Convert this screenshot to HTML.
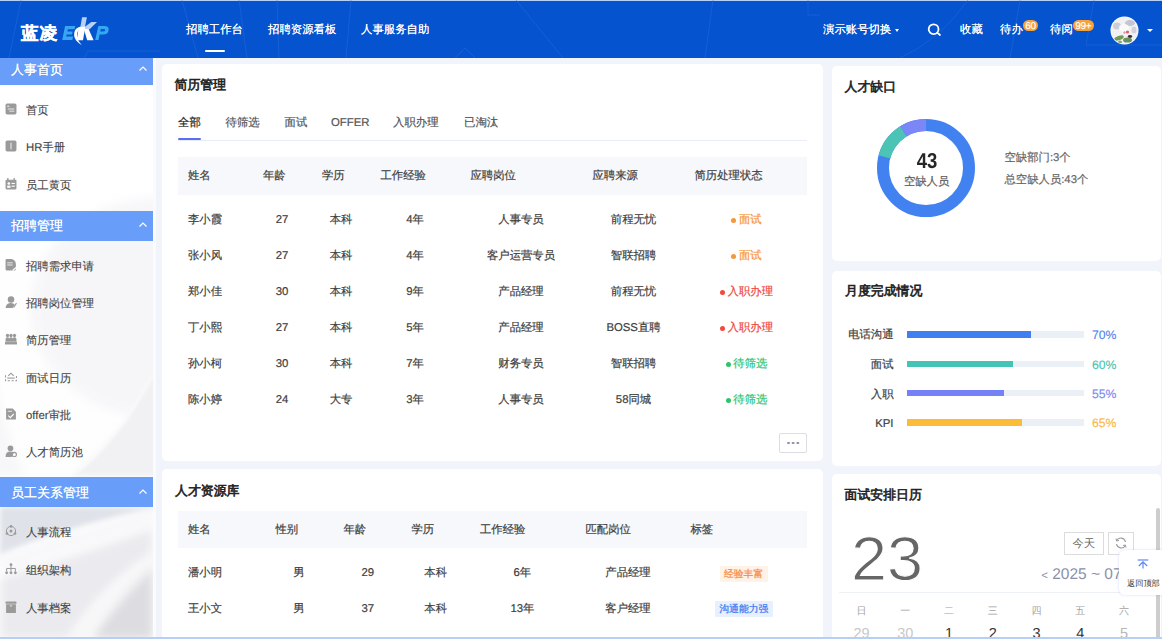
<!DOCTYPE html>
<html><head><meta charset="utf-8"><style>
*{box-sizing:border-box;margin:0;padding:0}
html,body{width:1162px;height:639px;overflow:hidden}
body{text-rendering:geometricPrecision;font-family:"Liberation Sans",sans-serif;background:#f1f4fa;position:relative;color:#333}
div{position:absolute;white-space:nowrap;line-height:1}
svg{position:absolute}
.card{background:#fff;border-radius:5px}
.nav{color:#fff;font-size:11.4px;text-shadow:0 0 0.4px #fff}
.grp{left:0;width:153px;background:#689ef9}
.gt{color:#fff;font-size:13px;left:11px;text-shadow:0 0 0.3px #fff}
.it{left:26px;font-size:11.35px;color:#444;-webkit-text-stroke:0.12px currentColor}
.ttl{font-size:12.9px;font-weight:normal;color:#222;-webkit-text-stroke:0.6px #222}
.th{background:#f6f8fb}
.t{font-size:11.35px;color:#404040;-webkit-text-stroke:0.2px currentColor}
.num{font-size:11.5px;color:#333}
</style></head><body>
<div style="left:0;top:0;width:1162px;height:58px;background:#0553cf;overflow:hidden">
<div style="left:0;top:0;width:1162px;height:1px;background:#b8cff6"></div>
<svg style="left:0;top:0" width="1162" height="58"><g stroke="#2f6fdc" stroke-width="0.8" fill="none" opacity="0.55">
<path d="M21 0 L9 58"/><path d="M84 58 L88 51 L160 51"/>
<path d="M182 0 L198 58"/><path d="M239 0 L247 58"/><path d="M277 0 L279 58"/><path d="M351 0 L346 58"/>
<path d="M516 0 L563 58"/><path d="M713 0 L705 58"/><path d="M455 58 L465 48 L475 58"/>
<path d="M968 0 Q940 40 900 58"/><path d="M1020 0 L1010 58"/><path d="M1094 0 L1086 45 L1162 45"/>
<path d="M808 0 L808 15 L820 15"/></g></svg>
<div style="left:21px;top:24.8px;color:#fff;font-size:17.5px;font-weight:bold;letter-spacing:1.3px;-webkit-text-stroke:0.4px #fff">蓝凌</div>
<svg style="left:0;top:0" width="120" height="58">
<path d="M65.1 26 L75.2 26 L74.6 29.3 L67.8 29.3 L67.3 31.4 L72.6 31.4 L72.1 34.4 L66.7 34.4 L66.1 36.6 L73 36.6 L72.4 39.9 L62.2 39.9 Z" fill="#38a6f2"/>
<path d="M98.3 26 L104.5 26 Q109.2 26 108.6 30.2 Q108 34.6 103 34.6 L99.6 34.6 L98.5 39.9 L95.2 39.9 Z M100.8 29.1 L100.3 31.6 L102.9 31.6 Q105 31.6 105.2 30.3 Q105.4 29.1 103.6 29.1 Z" fill="#33a9f3" fill-rule="evenodd"/>
<path d="M82.1 17.2 L86.9 17.2 L85.1 26.4 L80.4 26.4 Z" fill="#b8d0f4"/>
<path d="M85.2 26.6 L91.4 22 L97 22 L89.6 29.2 L84.8 29.2 Z" fill="#b8d0f4"/>
<path d="M78.8 27.5 L85.2 27.5 L83 40.2 L76.6 40.2 Z" fill="#fff"/>
<path d="M83.8 29 L88.6 29 L93.6 40.2 L87.2 40.2 Z" fill="#fff"/>
<path d="M85 26.2 Q77 25.8 74.8 30.8 Q72.8 36 76.2 40.5 Q78.5 43.2 81.8 45.2 Q77.8 41 77 36.5 Q76.6 31.2 80.2 29.2 Q82.2 28.2 85.2 28.2 Z" fill="#fff"/>
</svg>
<div class="nav" style="left:186px;top:25.3px;">招聘工作台</div>
<div style="left:205px;top:49.5px;width:20px;height:2.5px;background:#fff;border-radius:1px"></div>
<div class="nav" style="left:268px;top:25.3px;">招聘资源看板</div>
<div class="nav" style="left:361px;top:25.3px;">人事服务自助</div>
<div class="nav" style="left:823px;top:25.3px;">演示账号切换</div>
<div style="left:894.6px;top:29.4px;width:0;height:0;border-left:2.7px solid transparent;border-right:2.7px solid transparent;border-top:3.2px solid #fff"></div>
<svg style="left:926px;top:22.3px" width="17" height="15"><circle cx="7.6" cy="7.2" r="4.9" stroke="#fff" stroke-width="1.8" fill="none"/><path d="M11.2 10.6 L14 13" stroke="#fff" stroke-width="1.7" stroke-linecap="round"/></svg>
<div class="nav" style="left:960px;top:25.3px;">收藏</div>
<div class="nav" style="left:1000px;top:25.3px;">待办</div>
<div style="left:1023px;top:19.5px;width:15px;height:11px;border-radius:6px;background:#f6a23b;color:#fff;font-size:10px;line-height:14.6px;text-align:center;letter-spacing:-0.2px;-webkit-text-stroke:0.2px #fff">60</div>
<div class="nav" style="left:1050px;top:25.3px;">待阅</div>
<div style="left:1073px;top:19.5px;width:20.5px;height:11px;border-radius:6px;background:#f6a23b;color:#fff;font-size:10px;line-height:14.6px;text-align:center;letter-spacing:-0.4px;-webkit-text-stroke:0.2px #fff">99+</div>
<svg style="left:1109px;top:15px" width="31" height="31"><defs><clipPath id="avc"><circle cx="15.5" cy="15.5" r="13.3"/></clipPath><filter id="avb"><feGaussianBlur stdDeviation="0.7"/></filter></defs>
<circle cx="15.5" cy="15.5" r="14" fill="#fbfbfc"/>
<g clip-path="url(#avc)" filter="url(#avb)">
<rect width="31" height="31" fill="#f1f1f3"/>
<ellipse cx="8" cy="11" rx="4" ry="3.5" fill="#cdcdd8"/><ellipse cx="21" cy="8" rx="5" ry="3" fill="#c4c4d2"/><ellipse cx="25" cy="15" rx="2.5" ry="3.5" fill="#d2d2da"/>
<ellipse cx="15" cy="13" rx="5" ry="4" fill="#fafafa"/>
<ellipse cx="10" cy="23" rx="5" ry="2.2" fill="#6f9a58" transform="rotate(-20 10 23)"/>
<ellipse cx="18.5" cy="25" rx="4.5" ry="2.6" fill="#6d9063"/>
<ellipse cx="11" cy="27" rx="2" ry="1.5" fill="#8aa860"/>
<circle cx="18.5" cy="17" r="1.6" fill="#d96070"/><circle cx="15.5" cy="17.5" r="1.2" fill="#e39aa8"/>
<ellipse cx="21" cy="21.5" rx="2.2" ry="1.4" fill="#333"/>
</g></svg>
<div style="left:1146.5px;top:28.8px;width:0;height:0;border-left:3px solid transparent;border-right:3px solid transparent;border-top:3.6px solid #fff"></div>
</div>
<svg style="left:0;top:58px" width="153" height="581"><defs>
<linearGradient id="sg" x1="0" y1="0" x2="0" y2="581" gradientUnits="userSpaceOnUse"><stop offset="0" stop-color="#ffffff"/><stop offset="172" stop-color="#fdfdfd"/><stop offset="240" stop-color="#f3f3f6"/><stop offset="330" stop-color="#ededf1"/><stop offset="418" stop-color="#e9eaef"/><stop offset="581" stop-color="#efeff2"/></linearGradient>
<filter id="bl" x="-50%" y="-50%" width="200%" height="200%"><feGaussianBlur stdDeviation="5"/></filter>
<filter id="bl2" x="-50%" y="-50%" width="200%" height="200%"><feGaussianBlur stdDeviation="2.5"/></filter>
<filter id="bl1" x="-50%" y="-50%" width="200%" height="200%"><feGaussianBlur stdDeviation="1"/></filter></defs>
<rect width="153" height="581" fill="url(#sg)"/>
<ellipse cx="160" cy="250" rx="130" ry="110" fill="#f5f5f8" filter="url(#bl)" opacity="0.8"/>
<path d="M160 310 Q120 380 72 418 L160 418Z" fill="#f1f1f4" filter="url(#bl2)"/>
<path d="M152 318 Q118 382 72 418" stroke="#fbfbfc" stroke-width="1.6" fill="none" filter="url(#bl1)"/>
<path d="M-10 290 Q-2 360 25 418 L-10 418Z" fill="#f7f7f9" filter="url(#bl)"/>
<path d="M0 449 L153 449 L153 452 Q60 470 0 498Z" fill="#dfe2e8" filter="url(#bl2)"/>
<path d="M0 507 Q70 484 153 458" stroke="#f8f8fa" stroke-width="18" fill="none" filter="url(#bl)"/>
<path d="M0 520 Q80 497 153 470 L153 499 Q100 530 73 581 L0 581Z" fill="#ebebef" filter="url(#bl)"/>
<path d="M70 592 Q105 538 160 500" stroke="#f7f7f8" stroke-width="18" fill="none" filter="url(#bl)"/>
<path d="M153 510 Q115 545 92 581 L153 581Z" fill="#dddde1" filter="url(#bl)"/>
</svg>
<div style="left:153px;top:58px;width:2.5px;height:581px;background:#f9fbfd"></div>
<div class="grp" style="top:58px;height:27px"></div>
<div class="gt" style="left:11px;top:63px;">人事首页</div>
<svg style="left:138px;top:64.5px" width="10" height="7"><path d="M1.5 5.5 L5 2 L8.5 5.5" stroke="#fff" stroke-width="1.2" fill="none"/></svg>
<svg style="left:5px;top:102.5px" width="12" height="12" viewBox="0 0 11 11"><rect x="0.5" y="0.5" width="10" height="10" rx="1.5" fill="#9a9a9a"/><rect x="2" y="2.5" width="2" height="1" fill="#fff" opacity=".8"/><rect x="2.5" y="5" width="6" height="1" fill="#fff" opacity=".7"/><rect x="4" y="7" width="4.5" height="1" fill="#fff" opacity=".7"/></svg>
<div class="it" style="left:26px;top:105.5px;">首页</div>
<svg style="left:5px;top:140.0px" width="12" height="12" viewBox="0 0 11 11"><rect x="0.5" y="0.5" width="10" height="10" rx="1.5" fill="#9a9a9a"/><rect x="5" y="2.5" width="1" height="6" fill="#fff" opacity=".8"/></svg>
<div class="it" style="left:26px;top:143px;">HR手册</div>
<svg style="left:5px;top:177.5px" width="12" height="12" viewBox="0 0 11 11"><rect x="0.5" y="1.5" width="10" height="9" rx="1" fill="#9a9a9a"/><rect x="2" y="0" width="1.2" height="2.5" fill="#9a9a9a"/><rect x="7.8" y="0" width="1.2" height="2.5" fill="#9a9a9a"/><circle cx="3.5" cy="5" r="1.2" fill="#fff"/><rect x="2" y="7" width="3" height="2" fill="#fff"/><rect x="6" y="4.5" width="3" height="1" fill="#fff"/><rect x="6" y="7" width="3" height="1" fill="#fff"/></svg>
<div class="it" style="left:26px;top:180.5px;">员工黄页</div>
<div class="grp" style="top:210.5px;height:30.5px"></div>
<div class="gt" style="left:11px;top:218.8px;">招聘管理</div>
<svg style="left:138px;top:221px" width="10" height="7"><path d="M1.5 5.5 L5 2 L8.5 5.5" stroke="#fff" stroke-width="1.2" fill="none"/></svg>
<svg style="left:5px;top:258.5px" width="12" height="12" viewBox="0 0 11 11"><path d="M0.5 1 Q0.5 0 1.5 0 L6 0 Q10 1 10 5 L10 9 Q10 10.5 9 10.5 L1.5 10.5 Q0.5 10.5 0.5 9.5Z" fill="#9a9a9a"/><rect x="2" y="3" width="5" height="1" fill="#fff" opacity=".7"/><rect x="2" y="5" width="5" height="1" fill="#fff" opacity=".7"/><path d="M7 10.5 L11 7" stroke="#fff" stroke-width="1.2"/></svg>
<div class="it" style="left:26px;top:261.5px;">招聘需求申请</div>
<svg style="left:5px;top:295.8px" width="12" height="12" viewBox="0 0 11 11"><circle cx="5.5" cy="3.3" r="3" fill="#9a9a9a"/><path d="M0.5 11 Q1 6.5 5.5 6.5 Q8 6.5 9 8 L7 11Z" fill="#9a9a9a"/><path d="M8 10.5 L10.5 6.5" stroke="#9a9a9a" stroke-width="1"/></svg>
<div class="it" style="left:26px;top:298.8px;">招聘岗位管理</div>
<svg style="left:5px;top:333.2px" width="12" height="12" viewBox="0 0 11 11"><circle cx="2.3" cy="2.3" r="1.5" fill="#9a9a9a"/><circle cx="5.5" cy="2.3" r="1.5" fill="#9a9a9a"/><circle cx="8.7" cy="2.3" r="1.5" fill="#9a9a9a"/><path d="M0.5 8 L0.5 5.5 Q0.5 4 2.3 4 Q4 4 4 5.5 L4 8Z M3.8 8 L3.8 5.5 Q3.8 4 5.5 4 Q7.2 4 7.2 5.5 L7.2 8Z M7 8 L7 5.5 Q7 4 8.7 4 Q10.5 4 10.5 5.5 L10.5 8Z" fill="#9a9a9a"/><rect x="0" y="8.3" width="11" height="2.2" fill="#9a9a9a"/></svg>
<div class="it" style="left:26px;top:336.2px;">简历管理</div>
<svg style="left:5px;top:370.6px" width="12" height="12" viewBox="0 0 11 11"><path d="M0.5 4 L0.5 9 L10.5 9 L10.5 4" stroke="#9a9a9a" stroke-width="1" fill="none" stroke-dasharray="2 1.5"/><path d="M3 4.5 L5.5 2 L8 4.5" stroke="#9a9a9a" stroke-width="1" fill="none"/><rect x="2" y="6" width="7" height="1" fill="#9a9a9a"/></svg>
<div class="it" style="left:26px;top:373.6px;">面试日历</div>
<svg style="left:5px;top:408.0px" width="12" height="12" viewBox="0 0 11 11"><path d="M1 0.5 L7 0.5 L10 3.5 L10 10.5 L1 10.5Z" fill="#9a9a9a"/><rect x="2.5" y="2.5" width="4" height="1" fill="#fff" opacity=".7"/><path d="M3 7 L4.8 8.8 L8 5.5" stroke="#fff" stroke-width="1" fill="none"/></svg>
<div class="it" style="left:26px;top:411px;">offer审批</div>
<svg style="left:5px;top:445.0px" width="12" height="12" viewBox="0 0 11 11"><circle cx="5" cy="3" r="2.6" fill="#9a9a9a"/><path d="M0.5 11 Q0.5 6 5 6 Q7 6 8 7 L6 11Z" fill="#9a9a9a"/><circle cx="8.5" cy="8.8" r="2" fill="none" stroke="#9a9a9a" stroke-width="1"/></svg>
<div class="it" style="left:26px;top:448px;">人才简历池</div>
<div class="grp" style="top:476.8px;height:30.6px"></div>
<div class="gt" style="left:11px;top:485.8px;">员工关系管理</div>
<svg style="left:138px;top:488px" width="10" height="7"><path d="M1.5 5.5 L5 2 L8.5 5.5" stroke="#fff" stroke-width="1.2" fill="none"/></svg>
<svg style="left:5px;top:525.4px" width="12" height="12" viewBox="0 0 11 11"><circle cx="5.5" cy="5.5" r="4.2" fill="none" stroke="#9a9a9a" stroke-width="0.9"/><circle cx="5.5" cy="5.5" r="1.4" fill="#9a9a9a"/><circle cx="5.5" cy="1.3" r="1.2" fill="#9a9a9a"/><circle cx="1.8" cy="7.8" r="1.2" fill="#9a9a9a"/><circle cx="9.2" cy="7.8" r="1.2" fill="#9a9a9a"/></svg>
<div class="it" style="left:26px;top:528.4px;">人事流程</div>
<svg style="left:5px;top:563.0px" width="12" height="12" viewBox="0 0 11 11"><circle cx="5.5" cy="1.5" r="1.3" fill="#9a9a9a"/><path d="M5.5 2.5 L5.5 5 M1.5 8 L1.5 5 L9.5 5 L9.5 8 M5.5 5 L5.5 8" stroke="#9a9a9a" stroke-width="0.9" fill="none"/><circle cx="1.5" cy="9" r="1.3" fill="#9a9a9a"/><circle cx="5.5" cy="9" r="1.3" fill="#9a9a9a"/><circle cx="9.5" cy="9" r="1.3" fill="#9a9a9a"/></svg>
<div class="it" style="left:26px;top:566px;">组织架构</div>
<svg style="left:5px;top:600.5px" width="12" height="12" viewBox="0 0 11 11"><rect x="0.5" y="0.5" width="10" height="2" rx="0.5" fill="#9a9a9a"/><rect x="1" y="3" width="9" height="8" fill="#9a9a9a"/><rect x="4.5" y="4" width="2" height="1" fill="#fff" opacity=".7"/></svg>
<div class="it" style="left:26px;top:603.5px;">人事档案</div>
<div class="card" style="left:162px;top:63.5px;width:661px;height:397.5px"></div>
<div class="ttl" style="left:174.5px;top:79px;">简历管理</div>
<div class="t" style="left:178px;top:117.5px;color:#222;font-size:11.4px">全部</div>
<div class="t" style="left:225.5px;top:117.5px;color:#555;font-size:11.4px">待筛选</div>
<div class="t" style="left:284.5px;top:117.5px;color:#555;font-size:11.4px">面试</div>
<div class="t" style="left:331px;top:117.5px;color:#555;font-size:11.4px">OFFER</div>
<div class="t" style="left:393px;top:117.5px;color:#555;font-size:11.4px">入职办理</div>
<div class="t" style="left:464px;top:117.5px;color:#555;font-size:11.4px">已淘汰</div>
<div style="left:178px;top:139.5px;width:629px;height:1px;background:#e6ecf8"></div>
<div style="left:178px;top:138px;width:23px;height:2px;background:#5b6ef0;border-radius:1px"></div>
<div class="th" style="left:178px;top:157px;width:629px;height:37.5px"></div>
<div class="t" style="left:188px;top:170.5px;">姓名</div>
<div class="t" style="left:263px;top:170.5px;">年龄</div>
<div class="t" style="left:322px;top:170.5px;">学历</div>
<div class="t" style="left:380.5px;top:170.5px;">工作经验</div>
<div class="t" style="left:470.5px;top:170.5px;">应聘岗位</div>
<div class="t" style="left:592.5px;top:170.5px;">应聘来源</div>
<div class="t" style="left:694.5px;top:170.5px;">简历处理状态</div>
<div class="t" style="left:188px;top:214.5px;">李小霞</div>
<div class="t" style="left:222.00px;top:214.5px;width:120px;text-align:center;">27</div>
<div class="t" style="left:281.00px;top:214.5px;width:120px;text-align:center;">本科</div>
<div class="t" style="left:355.00px;top:214.5px;width:120px;text-align:center;">4年</div>
<div class="t" style="left:461.00px;top:214.5px;width:120px;text-align:center;">人事专员</div>
<div class="t" style="left:573.50px;top:214.5px;width:120px;text-align:center;">前程无忧</div>
<div class="t" style="left:686.5px;top:214.5px;width:120px;text-align:center;color:#f7963a"><span style="display:inline-block;width:5px;height:5px;border-radius:50%;background:#f7963a;margin-right:2.6px;position:relative;top:0.3px"></span>面试</div>
<div class="t" style="left:188px;top:250.6px;">张小风</div>
<div class="t" style="left:222.00px;top:250.6px;width:120px;text-align:center;">27</div>
<div class="t" style="left:281.00px;top:250.6px;width:120px;text-align:center;">本科</div>
<div class="t" style="left:355.00px;top:250.6px;width:120px;text-align:center;">4年</div>
<div class="t" style="left:461.00px;top:250.6px;width:120px;text-align:center;">客户运营专员</div>
<div class="t" style="left:573.50px;top:250.6px;width:120px;text-align:center;">智联招聘</div>
<div class="t" style="left:686.5px;top:250.6px;width:120px;text-align:center;color:#f7963a"><span style="display:inline-block;width:5px;height:5px;border-radius:50%;background:#f7963a;margin-right:2.6px;position:relative;top:0.3px"></span>面试</div>
<div class="t" style="left:188px;top:286.7px;">郑小佳</div>
<div class="t" style="left:222.00px;top:286.7px;width:120px;text-align:center;">30</div>
<div class="t" style="left:281.00px;top:286.7px;width:120px;text-align:center;">本科</div>
<div class="t" style="left:355.00px;top:286.7px;width:120px;text-align:center;">9年</div>
<div class="t" style="left:461.00px;top:286.7px;width:120px;text-align:center;">产品经理</div>
<div class="t" style="left:573.50px;top:286.7px;width:120px;text-align:center;">前程无忧</div>
<div class="t" style="left:686.5px;top:286.7px;width:120px;text-align:center;color:#f0493f"><span style="display:inline-block;width:5px;height:5px;border-radius:50%;background:#f0493f;margin-right:2.6px;position:relative;top:0.3px"></span>入职办理</div>
<div class="t" style="left:188px;top:322.8px;">丁小熙</div>
<div class="t" style="left:222.00px;top:322.8px;width:120px;text-align:center;">27</div>
<div class="t" style="left:281.00px;top:322.8px;width:120px;text-align:center;">本科</div>
<div class="t" style="left:355.00px;top:322.8px;width:120px;text-align:center;">5年</div>
<div class="t" style="left:461.00px;top:322.8px;width:120px;text-align:center;">产品经理</div>
<div class="t" style="left:573.50px;top:322.8px;width:120px;text-align:center;">BOSS直聘</div>
<div class="t" style="left:686.5px;top:322.8px;width:120px;text-align:center;color:#f0493f"><span style="display:inline-block;width:5px;height:5px;border-radius:50%;background:#f0493f;margin-right:2.6px;position:relative;top:0.3px"></span>入职办理</div>
<div class="t" style="left:188px;top:358.9px;">孙小柯</div>
<div class="t" style="left:222.00px;top:358.9px;width:120px;text-align:center;">30</div>
<div class="t" style="left:281.00px;top:358.9px;width:120px;text-align:center;">本科</div>
<div class="t" style="left:355.00px;top:358.9px;width:120px;text-align:center;">7年</div>
<div class="t" style="left:461.00px;top:358.9px;width:120px;text-align:center;">财务专员</div>
<div class="t" style="left:573.50px;top:358.9px;width:120px;text-align:center;">智联招聘</div>
<div class="t" style="left:686.5px;top:358.9px;width:120px;text-align:center;color:#2fc36c"><span style="display:inline-block;width:5px;height:5px;border-radius:50%;background:#2fc36c;margin-right:2.6px;position:relative;top:0.3px"></span>待筛选</div>
<div class="t" style="left:188px;top:395.0px;">陈小婷</div>
<div class="t" style="left:222.00px;top:395.0px;width:120px;text-align:center;">24</div>
<div class="t" style="left:281.00px;top:395.0px;width:120px;text-align:center;">大专</div>
<div class="t" style="left:355.00px;top:395.0px;width:120px;text-align:center;">3年</div>
<div class="t" style="left:461.00px;top:395.0px;width:120px;text-align:center;">人事专员</div>
<div class="t" style="left:573.50px;top:395.0px;width:120px;text-align:center;">58同城</div>
<div class="t" style="left:686.5px;top:395.0px;width:120px;text-align:center;color:#2fc36c"><span style="display:inline-block;width:5px;height:5px;border-radius:50%;background:#2fc36c;margin-right:2.6px;position:relative;top:0.3px"></span>待筛选</div>
<div style="left:779px;top:433px;width:28px;height:20px;border:1px solid #dcdde3;border-radius:2px"></div>
<div style="left:786.9px;top:441.6px;width:2.7px;height:2.7px;border-radius:50%;background:#9092a8;box-shadow:4.65px 0 0 #9092a8,9.3px 0 0 #9092a8"></div>
<div class="card" style="left:162px;top:469px;width:661px;height:200px"></div>
<div class="ttl" style="left:175px;top:484.5px;">人才资源库</div>
<div class="th" style="left:178px;top:511px;width:629px;height:37px"></div>
<div class="t" style="left:188px;top:525px;">姓名</div>
<div class="t" style="left:275.5px;top:525px;">性别</div>
<div class="t" style="left:343.5px;top:525px;">年龄</div>
<div class="t" style="left:411.5px;top:525px;">学历</div>
<div class="t" style="left:480px;top:525px;">工作经验</div>
<div class="t" style="left:585.5px;top:525px;">匹配岗位</div>
<div class="t" style="left:690.5px;top:525px;">标签</div>
<div class="t" style="left:188px;top:568.3px;">潘小明</div>
<div class="t" style="left:239.00px;top:568.3px;width:120px;text-align:center;">男</div>
<div class="t" style="left:307.70px;top:568.3px;width:120px;text-align:center;">29</div>
<div class="t" style="left:375.70px;top:568.3px;width:120px;text-align:center;">本科</div>
<div class="t" style="left:462.40px;top:568.3px;width:120px;text-align:center;">6年</div>
<div class="t" style="left:568.00px;top:568.3px;width:120px;text-align:center;">产品经理</div>
<div style="left:719.5px;top:565.9px;width:48.2px;height:16px;background:#fff2e7;color:#f78d45;font-size:9.8px;line-height:17px;text-align:center;border-radius:1px;-webkit-text-stroke:0.25px currentColor">经验丰富</div>
<div class="t" style="left:188px;top:604.3px;">王小文</div>
<div class="t" style="left:239.00px;top:604.3px;width:120px;text-align:center;">男</div>
<div class="t" style="left:307.70px;top:604.3px;width:120px;text-align:center;">37</div>
<div class="t" style="left:375.70px;top:604.3px;width:120px;text-align:center;">本科</div>
<div class="t" style="left:462.40px;top:604.3px;width:120px;text-align:center;">13年</div>
<div class="t" style="left:568.00px;top:604.3px;width:120px;text-align:center;">客户经理</div>
<div style="left:714.8px;top:601.0px;width:58px;height:16px;background:#e8f0fe;color:#3b7cf0;font-size:9.8px;line-height:17px;text-align:center;border-radius:1px;-webkit-text-stroke:0.25px currentColor">沟通能力强</div>
<div class="card" style="left:831.5px;top:65.5px;width:329.5px;height:195.5px"></div>
<div class="ttl" style="left:844.5px;top:80.5px;">人才缺口</div>
<svg style="left:875.8px;top:118.1px" width="100" height="100"><g transform="translate(50,50) rotate(-90)" fill="none" stroke-width="12">
<circle r="43" stroke="#4281f0"/>
<circle r="43" stroke="#4cc4b5" stroke-dasharray="0 213.6 32.5 100"/>
<circle r="43" stroke="#7b86f7" stroke-dasharray="0 246.1 24.1 100"/>
</g></svg>
<div style="left:897px;top:150.8px;width:60px;text-align:center;font-size:21.5px;font-weight:bold;color:#262626;transform:scaleX(0.86)">43</div>
<div class="t" style="left:886.60px;top:176.5px;width:80px;text-align:center;color:#606060">空缺人员</div>
<div class="t" style="left:1004.5px;top:153px;color:#666;">空缺部门:3个</div>
<div class="t" style="left:1004.5px;top:174.5px;color:#666;">总空缺人员:43个</div>
<div class="card" style="left:831.5px;top:270.5px;width:329.5px;height:195px"></div>
<div class="ttl" style="left:845px;top:285px;">月度完成情况</div>
<div class="t" style="left:773.5px;top:330.2px;width:120px;text-align:right">电话沟通</div>
<div style="left:906.8px;top:331.1px;width:177.4px;height:6.6px;background:#ebeff6"></div>
<div style="left:906.8px;top:331.1px;width:124.2px;height:6.6px;background:#3f7ff0"></div>
<div style="left:1092px;top:329.1px;font-size:12.2px;color:#4a86f0;-webkit-text-stroke:0.12px currentColor">70%</div>
<div class="t" style="left:773.5px;top:359.9px;width:120px;text-align:right">面试</div>
<div style="left:906.8px;top:360.5px;width:177.4px;height:6.6px;background:#ebeff6"></div>
<div style="left:906.8px;top:360.5px;width:106.4px;height:6.6px;background:#45c4b3"></div>
<div style="left:1092px;top:358.5px;font-size:12.2px;color:#45c2b1;-webkit-text-stroke:0.12px currentColor">60%</div>
<div class="t" style="left:773.5px;top:389.5px;width:120px;text-align:right">入职</div>
<div style="left:906.8px;top:389.8px;width:177.4px;height:6.6px;background:#ebeff6"></div>
<div style="left:906.8px;top:389.8px;width:97.6px;height:6.6px;background:#7582f7"></div>
<div style="left:1092px;top:387.8px;font-size:12.2px;color:#7a86f6;-webkit-text-stroke:0.12px currentColor">55%</div>
<div class="t" style="left:773.5px;top:419.1px;width:120px;text-align:right">KPI</div>
<div style="left:906.8px;top:419.2px;width:177.4px;height:6.6px;background:#ebeff6"></div>
<div style="left:906.8px;top:419.2px;width:115.3px;height:6.6px;background:#fbbc3a"></div>
<div style="left:1092px;top:417.2px;font-size:12.2px;color:#f8b544;-webkit-text-stroke:0.12px currentColor">65%</div>
<div class="card" style="left:831.5px;top:474px;width:329.5px;height:200px"></div>
<div class="ttl" style="left:844.5px;top:489px;">面试安排日历</div>
<div style="left:851.3px;top:529px;font-size:62px;color:#666;transform:scaleX(1.045);transform-origin:0 0;-webkit-text-stroke:1.1px #fff">23</div>
<div style="left:1064px;top:532px;width:39.7px;height:22.6px;border:1px solid #dcdcdc;font-size:11.3px;line-height:23px;text-align:center;color:#666">今天</div>
<div style="left:1107.8px;top:532px;width:25.8px;height:22.6px;border:1px solid #dcdcdc"></div>
<svg style="left:1114px;top:536px" width="14" height="14"><path d="M11.5 6 A4.8 4.8 0 0 0 2.6 4.5 M2.5 8 A4.8 4.8 0 0 0 11.4 9.5" stroke="#999" stroke-width="1.1" fill="none"/><path d="M2 2.5 L2.6 5 L5 4.5" stroke="#999" stroke-width="1" fill="none"/><path d="M12 11.5 L11.4 9 L9 9.5" stroke="#999" stroke-width="1" fill="none"/></svg>
<div style="left:1041.2px;top:567px;font-size:15.5px;color:#8b90a8"><span style="font-size:11.5px">&lt;</span> 2025 ~ 07</div>
<div style="left:839px;top:592px;width:322px;height:1px;background:#edf0f4"></div>
<div class="t" style="left:846.50px;top:606.8px;width:30px;text-align:center;font-size:10px;color:#a3a3a3;-webkit-text-stroke:0">日</div>
<div class="t" style="left:846.50px;top:627px;width:30px;text-align:center;font-size:14.5px;color:#c8c8c8;-webkit-text-stroke:0">29</div>
<div class="t" style="left:890.25px;top:606.8px;width:30px;text-align:center;font-size:10px;color:#a3a3a3;-webkit-text-stroke:0">一</div>
<div class="t" style="left:890.25px;top:627px;width:30px;text-align:center;font-size:14.5px;color:#c8c8c8;-webkit-text-stroke:0">30</div>
<div class="t" style="left:934.00px;top:606.8px;width:30px;text-align:center;font-size:10px;color:#a3a3a3;-webkit-text-stroke:0">二</div>
<div class="t" style="left:934.00px;top:627px;width:30px;text-align:center;font-size:14.5px;color:#333;-webkit-text-stroke:0">1</div>
<div class="t" style="left:977.75px;top:606.8px;width:30px;text-align:center;font-size:10px;color:#a3a3a3;-webkit-text-stroke:0">三</div>
<div class="t" style="left:977.75px;top:627px;width:30px;text-align:center;font-size:14.5px;color:#333;-webkit-text-stroke:0">2</div>
<div class="t" style="left:1021.50px;top:606.8px;width:30px;text-align:center;font-size:10px;color:#a3a3a3;-webkit-text-stroke:0">四</div>
<div class="t" style="left:1021.50px;top:627px;width:30px;text-align:center;font-size:14.5px;color:#333;-webkit-text-stroke:0">3</div>
<div class="t" style="left:1065.25px;top:606.8px;width:30px;text-align:center;font-size:10px;color:#a3a3a3;-webkit-text-stroke:0">五</div>
<div class="t" style="left:1065.25px;top:627px;width:30px;text-align:center;font-size:14.5px;color:#333;-webkit-text-stroke:0">4</div>
<div class="t" style="left:1109.00px;top:606.8px;width:30px;text-align:center;font-size:10px;color:#a3a3a3;-webkit-text-stroke:0">六</div>
<div class="t" style="left:1109.00px;top:627px;width:30px;text-align:center;font-size:14.5px;color:#b5b5b5;-webkit-text-stroke:0">5</div>
<div style="left:1155.5px;top:507.5px;width:4.5px;height:140px;background:#cdcdcd;border-radius:2px"></div>
<div style="left:1118.8px;top:550.2px;width:50px;height:45.2px;background:#fff;border-radius:6px;box-shadow:0 0 3px rgba(90,130,230,0.28)"></div>
<svg style="left:1136px;top:557px" width="14" height="15"><path d="M1.7 3 L12.3 3" stroke="#5d86f2" stroke-width="1.2"/><path d="M7 4.8 L7 11.5 M2.8 9 L7 4.8 L11.2 9" stroke="#5d86f2" stroke-width="1.2" fill="none"/></svg>
<div style="left:1127px;top:579.5px;font-size:8.2px;color:#333">返回顶部</div>
<div style="left:0;top:636.5px;width:1162px;height:2.5px;background:#b5cff7"></div>
</body></html>
